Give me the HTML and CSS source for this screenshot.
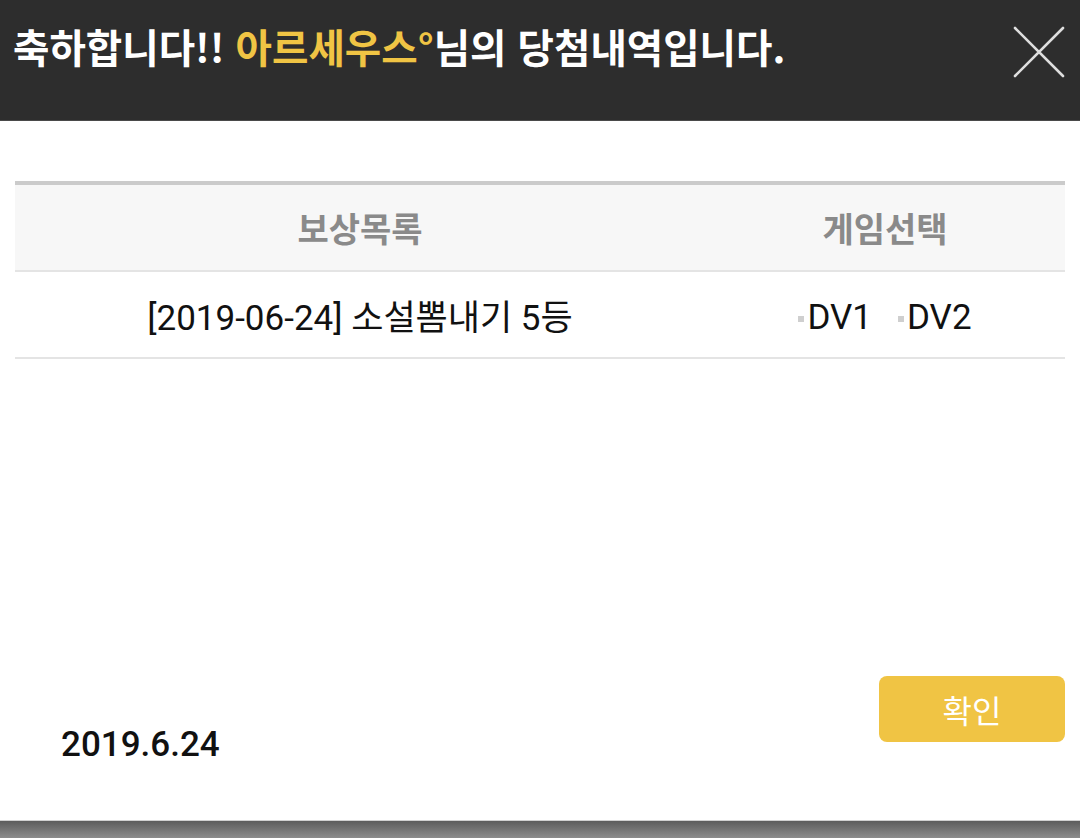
FILE: index.html
```html
<!DOCTYPE html>
<html lang="ko">
<head>
  <meta charset="UTF-8">
  <meta name="viewport" content="width=device-width, initial-scale=1.0">
  <title>당첨내역</title>
  <link rel="stylesheet" href="styles.css">
</head>
<body>
  <div class="dialog">
    <div class="header">
      <h1 class="title">축하합니다!! <span class="nick">아르세우스°</span>님의 당첨내역입니다.</h1>
      <button class="close" type="button" aria-label="닫기">
        <svg width="52" height="52" viewBox="0 0 52 52">
          <path d="M2 2 L50 50 M50 2 L2 50" stroke="#dedede" stroke-width="2.6" stroke-linecap="round" fill="none"/>
        </svg>
      </button>
    </div>

    <div class="content">
      <div class="table">
        <div class="th">보상목록</div>
        <div class="th">게임선택</div>
        <div class="td">[2019-06-24] 소설뽐내기 5등</div>
        <div class="td games">
          <span class="game">DV1</span>
          <span class="game">DV2</span>
        </div>
      </div>

      <div class="footer">
        <div class="date">2019.6.24</div>
        <button class="ok" type="button">확인</button>
      </div>
    </div>

    <div class="bottom-bar"></div>
  </div>
</body>
</html>
```

FILE: styles.css
```css
body {
  margin: 0;
  background: #fff;
  font-family: Roboto, "Noto Sans CJK KR", sans-serif;
}
.dialog {
  height: 838px;
  display: flex;
  flex-direction: column;
}
.header {
  height: 120px;
  flex-shrink: 0;
  background: #2d2d2d;
  border-bottom: 1px solid #4a4a4a;
  display: flex;
  justify-content: space-between;
  align-items: flex-start;
  padding: 0 15px 0 13px;
}
.title {
  margin: 0;
  padding-top: 19px;
  font-family: "Noto Sans CJK KR", sans-serif;
  font-size: 39.6px;
  line-height: 54px;
  font-weight: bold;
  color: #fff;
}
.nick {
  color: #f0c444;
}
.close {
  margin-top: 26px;
  padding: 0;
  border: none;
  background: none;
  width: 52px;
  height: 52px;
}
.close svg {
  display: block;
}
.content {
  flex: 1;
  padding: 60px 15px 0;
}
.table {
  display: grid;
  grid-template-columns: 690px 1fr;
  border-top: 4px solid #cbcbcb;
}
.th {
  height: 85px;
  display: flex;
  align-items: center;
  justify-content: center;
  background: #f7f7f7;
  border-bottom: 2px solid #e4e4e4;
  font-family: "Noto Sans CJK KR", sans-serif;
  font-size: 34px;
  font-weight: bold;
  color: #8a8a8a;
}
.td {
  height: 85px;
  display: flex;
  align-items: center;
  justify-content: center;
  border-bottom: 2px solid #e4e4e4;
  font-size: 35px;
  color: #111;
}
.games {
  gap: 26px;
}
.game {
  margin-top: 5px;
}
.game::before {
  content: "";
  display: inline-block;
  width: 6px;
  height: 6px;
  margin-right: 3px;
  background: #cfcfcf;
  vertical-align: middle;
}
.footer {
  margin-top: 317px;
  display: flex;
  justify-content: space-between;
  align-items: flex-start;
}
.date {
  margin-top: 48px;
  padding-left: 46px;
  font-size: 35px;
  font-weight: 500;
  color: #111;
}
.ok {
  width: 186px;
  height: 66px;
  border: none;
  border-radius: 8px;
  background: #f0c444;
  color: #fff;
  font-family: "Noto Sans CJK KR", sans-serif;
  font-size: 32px;
}
.bottom-bar {
  height: 17px;
  flex-shrink: 0;
  border-top: 1px solid #d0d0d0;
  background: linear-gradient(#5c5c5c, #8c8c8c);
}
```
